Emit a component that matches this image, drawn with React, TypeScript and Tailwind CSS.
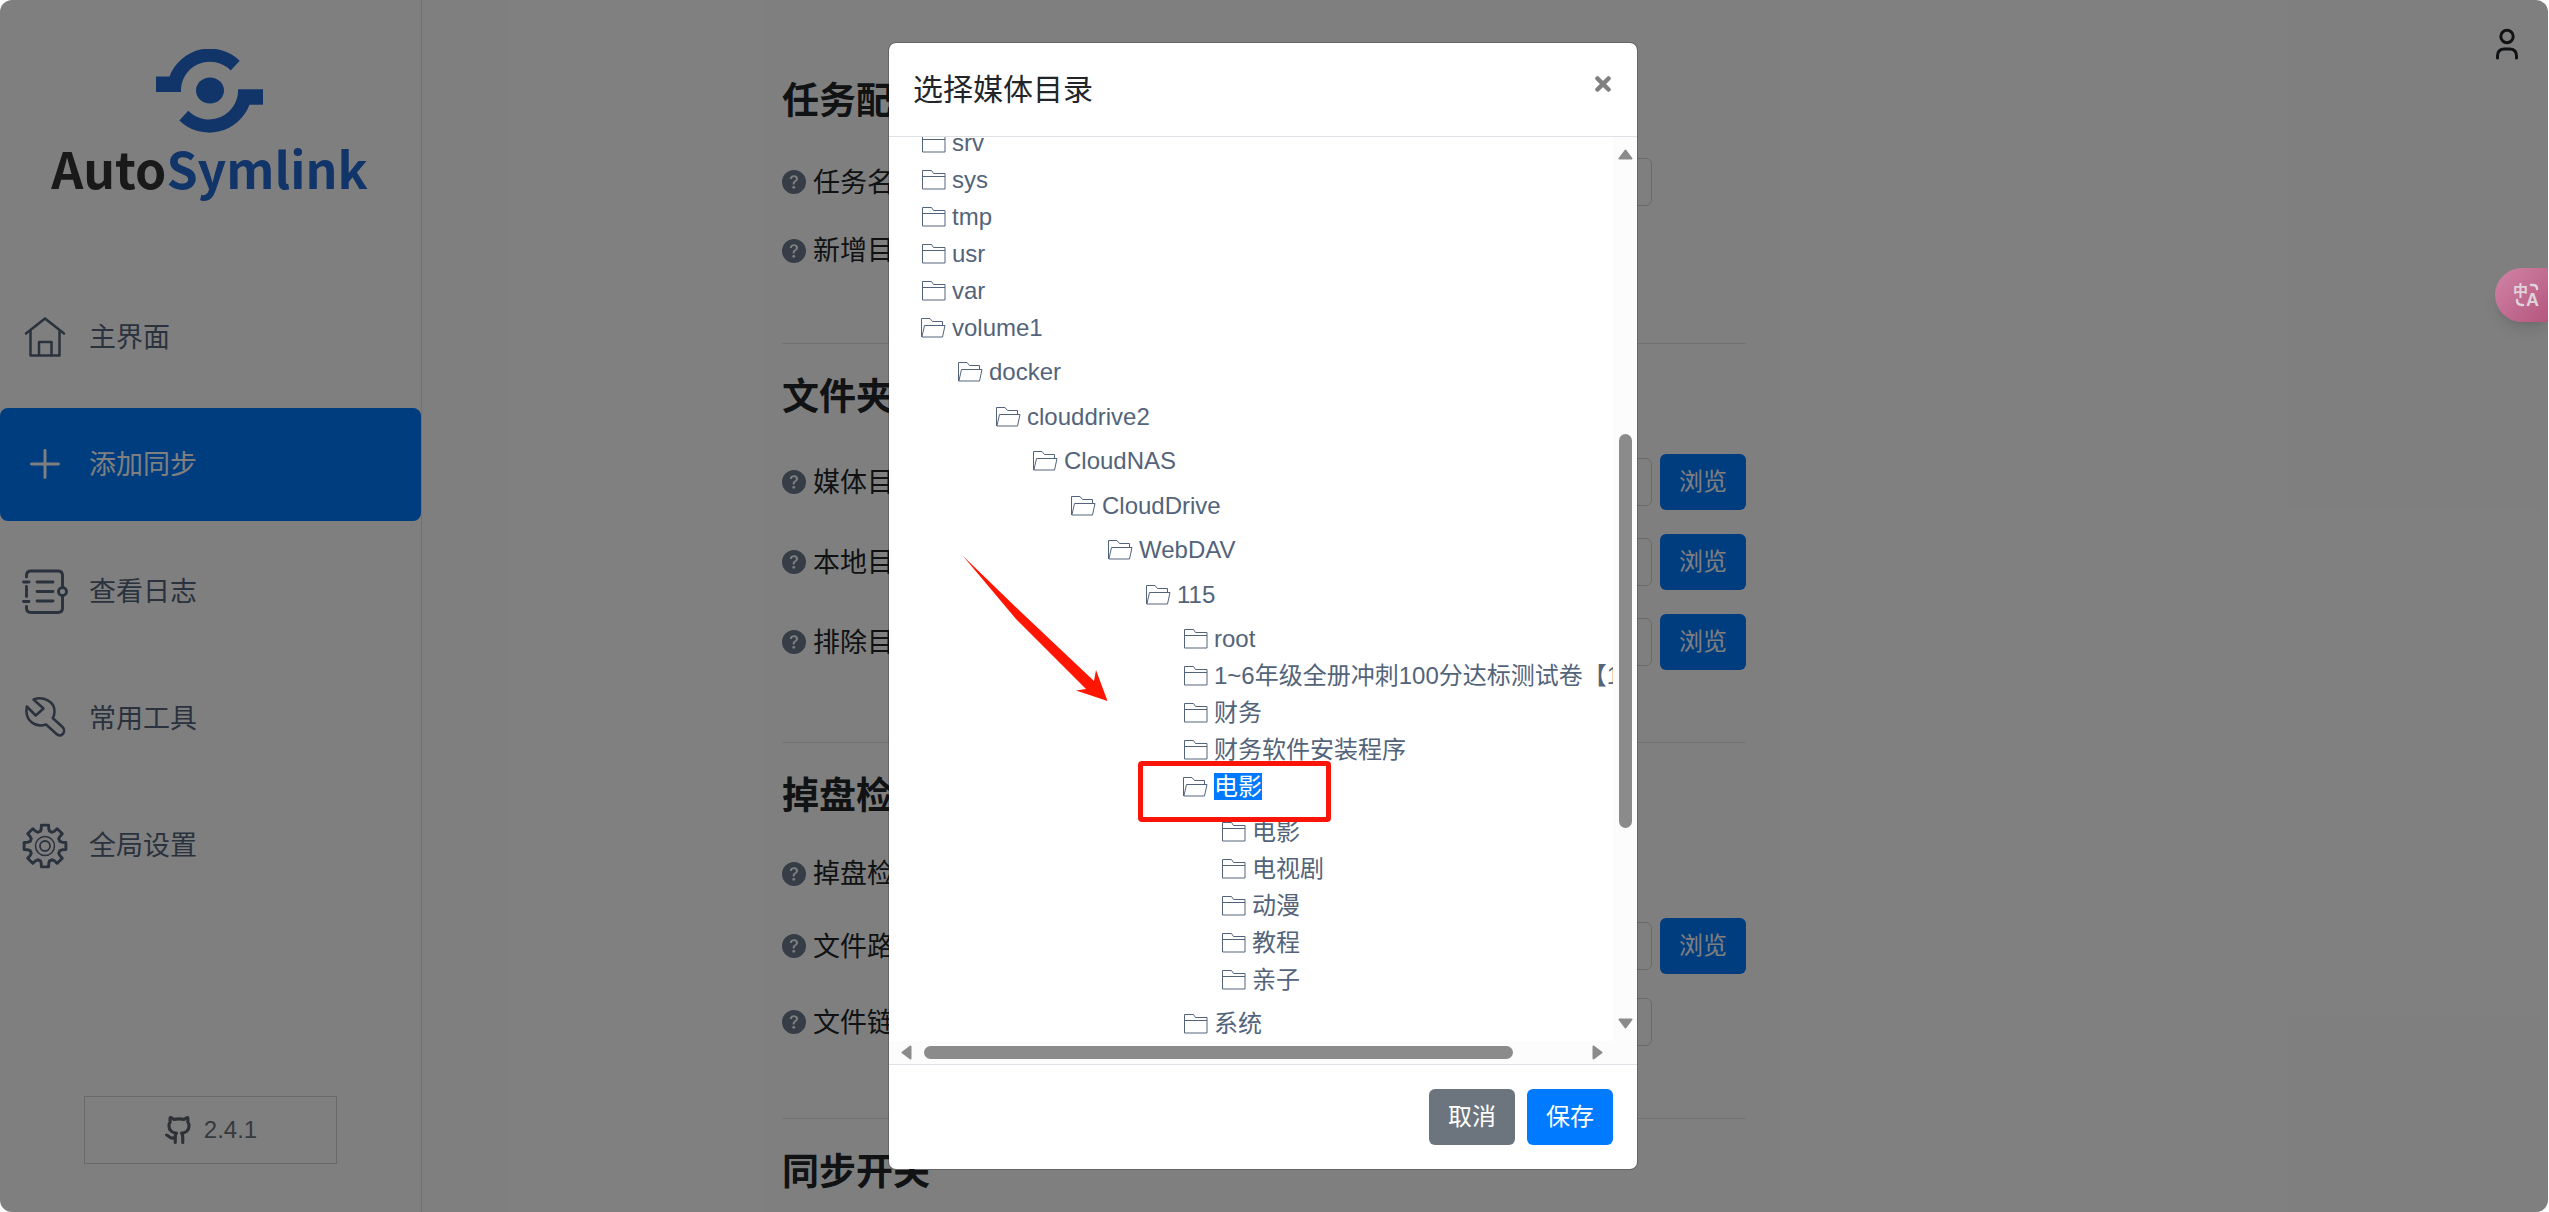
import { useState } from 'react'
import type { ReactNode } from 'react'
import { Github } from 'lucide-react'
import { BsQuestionCircleFill } from 'react-icons/bs'

interface TreeItem {
  name: string
  selected?: boolean
  children?: TreeItem[]
}

interface Field {
  id: string
  label: string
  type: 'text' | 'browse' | 'check'
}

const TREE: TreeItem[] = [
  { name: 'srv' },
  { name: 'sys' },
  { name: 'tmp' },
  { name: 'usr' },
  { name: 'var' },
  {
    name: 'volume1',
    children: [
      {
        name: 'docker',
        children: [
          {
            name: 'clouddrive2',
            children: [
              {
                name: 'CloudNAS',
                children: [
                  {
                    name: 'CloudDrive',
                    children: [
                      {
                        name: 'WebDAV',
                        children: [
                          {
                            name: '115',
                            children: [
                              { name: 'root' },
                              { name: '1~6年级全册冲刺100分达标测试卷【1' },
                              { name: '财务' },
                              { name: '财务软件安装程序' },
                              {
                                name: '电影',
                                selected: true,
                                children: [
                                  { name: '电影' },
                                  { name: '电视剧' },
                                  { name: '动漫' },
                                  { name: '教程' },
                                  { name: '亲子' },
                                ],
                              },
                              { name: '系统' },
                            ],
                          },
                        ],
                      },
                    ],
                  },
                ],
              },
            ],
          },
        ],
      },
    ],
  },
]

const SECTIONS: { title: string; fields: Field[] }[] = [
  {
    title: '任务配置',
    fields: [
      { id: 'task-name', label: '任务名称', type: 'text' },
      { id: 'new-dir', label: '新增目录', type: 'check' },
    ],
  },
  {
    title: '文件夹配置',
    fields: [
      { id: 'media-dir', label: '媒体目录', type: 'browse' },
      { id: 'local-dir', label: '本地目录', type: 'browse' },
      { id: 'exclude-dir', label: '排除目录', type: 'browse' },
    ],
  },
  {
    title: '掉盘检测',
    fields: [
      { id: 'mount-check', label: '掉盘检测', type: 'check' },
      { id: 'file-path', label: '文件路径', type: 'browse' },
      { id: 'file-link', label: '文件链接', type: 'text' },
    ],
  },
  { title: '同步开关', fields: [] },
]

// 齿轮外轮廓：8 个齿
const GEAR_POINTS = Array.from({ length: 8 }, (_, i) => {
  const a = (i * Math.PI) / 4
  return [
    [15.5, a - 0.3],
    [17.5, a - 0.22],
    [21.2, a - 0.17],
    [21.2, a + 0.17],
    [17.5, a + 0.22],
    [15.5, a + 0.3],
  ]
    .map(([r, t]) => `${(24 + r * Math.cos(t)).toFixed(2)},${(24 + r * Math.sin(t)).toFixed(2)}`)
    .join(' ')
}).join(' ')

function NavIcon({ children }: { children: ReactNode }) {
  return (
    <svg
      viewBox="0 0 48 48"
      className="size-12 shrink-0"
      fill="none"
      stroke="currentColor"
      strokeWidth="2.9"
      strokeLinecap="round"
      strokeLinejoin="round"
      aria-hidden="true"
    >
      {children}
    </svg>
  )
}

const NAV = [
  {
    label: '主界面',
    icon: (
      <NavIcon>
        <path d="M5 19.5 24 4.5l19 15" strokeWidth="2.5" />
        <path d="M9.5 17v24.5h29V17" strokeWidth="2.5" />
        <path d="M18 41V28h12.5v13" strokeWidth="2.5" />
      </NavIcon>
    ),
  },
  {
    label: '添加同步',
    icon: (
      <NavIcon>
        <path d="M24 9.5v27M10.5 23h27" />
      </NavIcon>
    ),
  },
  {
    label: '查看日志',
    icon: (
      <NavIcon>
        <path d="M5.5 9V7.5q0-4.5 4.5-4.5h27q4.5 0 4.5 4.5V19" />
        <path d="M41.5 28v12q0 4.5-4.5 4.5H10q-4.5 0-4.5-4.5V38.5" />
        <path d="M5.5 18.5v10M2.5 14H8M2.5 33.5H8" />
        <path d="M16 14h16M16 23.5h16M16 33h16" />
        <circle cx="41.5" cy="23.5" r="4" />
      </NavIcon>
    ),
  },
  {
    label: '常用工具',
    icon: (
      <NavIcon>
        <path d="M12.5 4.5C22 1 34 6 33.5 17c-.1 2.500-1 5-1.800 6l9.800 9c4.500 4.500-1.500 11.500-6 7L25 29.500C15 33 3 26 5.800 11.500l8.900 9 7.800-7Z" strokeWidth="2.5" />
      </NavIcon>
    ),
  },
  {
    label: '全局设置',
    icon: (
      <NavIcon>
        <polygon points={GEAR_POINTS} />
        <circle cx="24" cy="24" r="9.5" strokeWidth="1.5" />
        <circle cx="24" cy="24" r="5" strokeWidth="1.8" />
      </NavIcon>
    ),
  },
]

function Logo() {
  return (
    <div className="flex flex-col items-center">
      <svg viewBox="0 0 107 84" className="h-[84px] w-[107px]" fill="#246ad2" aria-hidden="true">
        <path d="M0 27.5H13.5A43 43 0 0 1 83.7 11.7L74.7 21.4A29 29 0 0 0 25 43H0Z" />
        <path d="M107 55.7H93.5A43 43 0 0 1 23.3 71.5L32.3 61.8A29 29 0 0 0 82 40.2H107Z" />
        <ellipse cx="54" cy="41.5" rx="14" ry="13" />
      </svg>
      <div className="text-[50px] leading-[68px] font-bold whitespace-nowrap text-[#333] font-['Noto_Sans_CJK_SC',sans-serif]">
        Auto<span className="text-[#246ad2]">Symlink</span>
      </div>
    </div>
  )
}

function Sidebar() {
  return (
    <aside className="flex w-[422px] shrink-0 flex-col border-r border-[#dee2e6] text-[#53647a]">
      <div className="pt-[49px] pr-0.5 pb-20">
        <Logo />
      </div>
      <nav className="flex flex-col gap-3.5">
        {NAV.map((item) => (
          <a
            key={item.label}
            href="#"
            className={`flex h-[113px] items-center gap-5 rounded-lg pl-[21px] text-[27px] ${
              item.label === '添加同步' ? 'bg-[#007bff] text-white' : ''
            }`}
          >
            {item.icon}
            <span className="pt-0.5">{item.label}</span>
          </a>
        ))}
      </nav>
      <a
        href="#"
        className="mx-[84px] mt-auto mb-12 flex h-[68px] items-center justify-center gap-2.5 border border-[#ced4da] text-2xl text-[#6c757d]"
      >
        <Github className="size-[30px] text-[#5c646c]" strokeWidth={2.5} />
        2.4.1
      </a>
    </aside>
  )
}

function FieldRow({ field }: { field: Field }) {
  const { id, label, type } = field
  const height = type === 'browse' ? 'h-14' : type === 'text' ? 'h-12' : 'h-[41px]'
  return (
    <div className={`flex items-center ${height}`}>
      <label htmlFor={id} className="flex w-[200px] shrink-0 items-center gap-[7px] text-[27px]">
        <BsQuestionCircleFill className="size-6 text-[#6c7a8e]" />
        <span className="pt-0.5">{label}</span>
      </label>
      {type === 'check' ? (
        <input id={id} type="checkbox" className="size-6" />
      ) : (
        <input
          id={id}
          type="text"
          className={`h-12 min-w-0 flex-1 rounded-md border border-[#ced4da] px-4 text-2xl ${
            type === 'text' ? 'mr-[94px]' : 'mr-2'
          }`}
        />
      )}
      {type === 'browse' && (
        <button type="button" className="h-14 w-[86px] rounded-md bg-[#007bff] text-2xl text-white">
          浏览
        </button>
      )}
    </div>
  )
}

function TaskForm() {
  return (
    <main className="min-w-0 flex-1 pt-[78px] pl-[360px]">
      <form className="max-w-[964px] text-[#212529]">
        {SECTIONS.map((section, i) => (
          <section key={section.title} className={i > 0 ? 'mt-[72px] border-t border-black/10 pt-[30px]' : ''}>
            <h2 className="mb-8 text-[37px] leading-[48px] font-bold">{section.title}</h2>
            <div className="flex flex-col gap-6">
              {section.fields.map((field) => (
                <FieldRow key={field.id} field={field} />
              ))}
            </div>
          </section>
        ))}
      </form>
    </main>
  )
}

function FolderIcon({ open }: { open: boolean }) {
  return (
    <svg viewBox="0 0 25 20" className="h-5 w-[25px] shrink-0" fill="none" stroke="currentColor" aria-hidden="true">
      {open ? (
        <>
          <path d="M.5 19V.5h8.5l2.5 3h10v4" />
          <path d="M3.5 7.5h20.5l-2.5 11.500H.9Z" />
        </>
      ) : (
        <path d="M1.5.5h9l2 3h11.500v15.500h-22.500ZM1.500 6.500H24" />
      )}
    </svg>
  )
}

function TreeNode({ item, depth }: { item: TreeItem; depth: number }) {
  return (
    <li>
      <button type="button" className="flex h-[37px] items-center gap-1.5 whitespace-nowrap">
        <FolderIcon open={!!item.children} />
        <span className={item.selected ? 'bg-[#0078ff] leading-[27px] text-white' : 'leading-[27px]'}>{item.name}</span>
      </button>
      {item.children && (
        <ul className={depth % 2 === 0 ? 'pt-[7px] pb-2 pl-[37px]' : 'pt-2 pb-[7px] pl-[38px]'}>
          {item.children.map((child) => (
            <TreeNode key={child.name} item={child} depth={depth + 1} />
          ))}
        </ul>
      )}
    </li>
  )
}

function ScrollArrow({ className }: { className: string }) {
  return (
    <svg viewBox="0 0 15 11" className={className} fill="#8b8b8b" stroke="#8b8b8b" strokeWidth="2" strokeLinejoin="round" aria-hidden="true">
      <path d="M7.5 1.5 13.5 9.5H1.5Z" />
    </svg>
  )
}

function FolderModal({ onClose }: { onClose: () => void }) {
  return (
    <div
      role="dialog"
      aria-labelledby="folder-modal-title"
      className="flex h-[calc(100vh-84px)] w-[750px] flex-col overflow-hidden rounded-lg border border-black/20 bg-white bg-clip-padding"
    >
      <div className="flex items-start justify-between border-b border-[#dee2e6] p-6">
        <h5 id="folder-modal-title" className="text-[30px] leading-[45px] text-[#212529]">
          选择媒体目录
        </h5>
        <button type="button" aria-label="关闭" onClick={onClose} className="flex h-[34px] w-5 items-center justify-center">
          <svg viewBox="0 0 16 16" className="size-4 text-[#7f7f7f]" stroke="currentColor" strokeWidth="4.5" strokeLinecap="round" aria-hidden="true">
            <path d="M2.5 2.5l11 11M13.5 2.5l-11 11" />
          </svg>
        </button>
      </div>

      <div className="relative flex min-h-0 flex-1 flex-col">
        <div className="flex min-h-0 flex-1">
          <div className="min-w-0 flex-1 overflow-hidden pl-8">
            <ul className="-mt-[13px] text-2xl text-[#53647a]">
              {TREE.map((item) => (
                <TreeNode key={item.name} item={item} depth={0} />
              ))}
            </ul>
          </div>
          <div className="flex w-6 flex-col items-center bg-[#fcfcfc] py-3">
            <ScrollArrow className="h-[11px] w-[15px]" />
            <div className="grow-[274]" />
            <div className="w-[13px] grow-[395] rounded-full bg-[#8b8b8b]" />
            <div className="grow-[190]" />
            <ScrollArrow className="h-[11px] w-[15px] rotate-180" />
          </div>
        </div>
        <div className="flex h-[23px] items-center bg-[#fcfcfc] pr-8 pl-2.5">
          <ScrollArrow className="h-[11px] w-[15px] -rotate-90" />
          <div className="grow-[10]" />
          <div className="h-[13px] grow-[588] rounded-full bg-[#8b8b8b]" />
          <div className="grow-[77]" />
          <ScrollArrow className="h-[11px] w-[15px] rotate-90" />
        </div>

        {/* 标注：箭头和红框 */}
        <svg viewBox="0 0 145 146" className="absolute top-[419px] left-[74px] h-[146px] w-[145px]" fill="#ff1500" aria-hidden="true">
          <path d="M0 0 59 57 131 125 133 114 144.5 145 113 134.5 123 133 53 63Z" />
        </svg>
        <div className="absolute top-[624px] left-[249px] h-[61px] w-[193px] rounded-sm border-[5px] border-[#fb1509]" />
      </div>

      <div className="flex justify-end gap-3 border-t border-[#dee2e6] p-6 text-2xl text-white">
        <button type="button" onClick={onClose} className="h-14 w-[86px] rounded-md bg-[#6c757d]">
          取消
        </button>
        <button type="button" className="h-14 w-[86px] rounded-md bg-[#007bff]">
          保存
        </button>
      </div>
    </div>
  )
}

export default function App() {
  const [open, setOpen] = useState(true)

  return (
    <div className="relative mr-px h-screen overflow-hidden rounded-xl bg-white font-['Liberation_Sans','Noto_Sans_CJK_SC',sans-serif]">
      <div className="flex h-full">
        <Sidebar />
        <TaskForm />
      </div>

      <button type="button" aria-label="用户" className="absolute top-7 right-[29px]">
        <svg viewBox="0 0 24 32" className="h-8 w-6" fill="none" stroke="#212529" strokeWidth="3" strokeLinecap="round" aria-hidden="true">
          <circle cx="12" cy="8.5" r="6.2" />
          <path d="M2.5 30v-2q0-7 7-7h5q7 0 7 7v2" />
        </svg>
      </button>

      {open && (
        <div className="absolute inset-0 flex items-start justify-center bg-black/50 pt-[42px] pr-[22px]">
          <FolderModal onClose={() => setOpen(false)} />
        </div>
      )}

      <button
        type="button"
        aria-label="翻译"
        className="absolute top-[268px] right-0 h-[54px] w-[53px] rounded-l-full bg-linear-to-br from-[#d084a6] to-[#b5567f] pl-[17px] shadow-lg"
      >
        <svg viewBox="0 0 32 32" className="size-8" fill="none" stroke="#dfd3d9" strokeWidth="2.5" strokeLinecap="round" aria-hidden="true">
          <text x="1" y="17" fontSize="15" fontWeight="700" fill="#dfd3d9" stroke="none">
            中
          </text>
          <text x="14" y="27" fontSize="18" fontWeight="700" fill="#dfd3d9" stroke="none">
            A
          </text>
          <path d="M19 6h2q4 0 4 4M5 21q0 5 5 5h1" />
        </svg>
      </button>
    </div>
  )
}
